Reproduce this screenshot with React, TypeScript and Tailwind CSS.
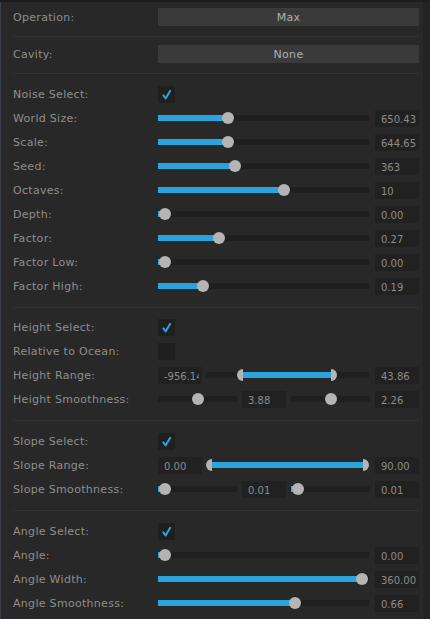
import type { ReactNode } from 'react';

// position along a track, leaving room for the thumb at both ends
const at = (f: number, pad: number) => `calc(${pad}px + ${f} * (100% - ${pad * 2}px))`;

function Row({ label, children }: { label: string; children?: ReactNode }) {
  return (
    <div className="flex h-[24px] items-center">
      <div className="mt-[2px] w-[145px] shrink-0 whitespace-nowrap tracking-[0.3px] text-[#8e8e8e]">{label}</div>
      <div className="flex flex-1 items-center gap-[6px]">{children}</div>
    </div>
  );
}

function Value({ v }: { v: string }) {
  return (
    <div className="h-[17px] w-[44px] shrink-0 bg-[#212121] pl-[6px] pr-[3px] pt-[1px] text-[10px] leading-[17px] text-[#8c8c8c]">
      <div className="overflow-hidden whitespace-nowrap">{v}</div>
    </div>
  );
}

function Slider({ f, fill = true }: { f: number; fill?: boolean }) {
  return (
    <div className="relative h-[6px] flex-1 bg-[#1f1f1f]">
      {fill && <div className="h-full bg-[#2ba3dc]" style={{ width: at(f, 7) }} />}
      <div
        className="absolute top-1/2 h-[12px] w-[12px] -translate-x-1/2 -translate-y-1/2 rounded-full bg-[#b4b4b4]"
        style={{ left: at(f, 7) }}
      />
    </div>
  );
}

function Range({ lo, hi }: { lo: number; hi: number }) {
  return (
    <div className="relative h-[6px] flex-1 bg-[#1f1f1f]">
      <div
        className="absolute top-0 h-full bg-[#2ba3dc]"
        style={{ left: at(lo, 6), right: `calc(100% - ${at(hi, 6)})` }}
      />
      <div
        className="absolute top-1/2 h-[12px] w-[6px] -translate-x-full -translate-y-1/2 rounded-l-full bg-[#b4b4b4]"
        style={{ left: at(lo, 6) }}
      />
      <div
        className="absolute top-1/2 h-[12px] w-[6px] -translate-y-1/2 rounded-r-full bg-[#b4b4b4]"
        style={{ left: at(hi, 6) }}
      />
    </div>
  );
}

function Check({ on }: { on: boolean }) {
  return (
    <div className="flex h-[17px] w-[17px] items-center justify-center bg-[#1f1f1f]">
      {on && (
        <svg width="11" height="11" viewBox="0 0 11 11">
          <path d="M2.4 6.4 L4.6 9.4 L9.2 1.8" fill="none" stroke="#2ba3dc" strokeWidth="2" strokeLinecap="round" strokeLinejoin="round" />
        </svg>
      )}
    </div>
  );
}

function Button({ text }: { text: string }) {
  return (
    <div className="flex h-[18px] flex-1 items-center justify-center bg-[#3a3a3a] pt-[2px] tracking-[0.3px] text-[#b0b0b0]">
      {text}
    </div>
  );
}

const Sep = ({ className }: { className: string }) => <div className={`h-px bg-[#333333] ${className}`} />;

export default function App() {
  return (
    <div className="flex h-[619px] w-[430px] flex-col overflow-hidden bg-[#232323] font-['DejaVu_Sans',sans-serif] text-[11px]">
      <div className="h-[2px] bg-[#1d1d1d]" />
      <div className="flex flex-1">
        <div className="w-[423px] border-l border-[#3b4048] bg-[#282828] pl-[12px] pr-[4px] pt-[3px]">
          <Row label="Operation:">
            <Button text="Max" />
          </Row>
          <Sep className="mt-[7px]" />
          <div className="mt-[5px]">
            <Row label="Cavity:">
              <Button text="None" />
            </Row>
          </div>
          <Sep className="mt-[7px]" />

          {/* noise */}
          <div className="pt-[8px]">
            <Row label="Noise Select:">
              <Check on />
            </Row>
            <Row label="World Size:">
              <Slider f={0.32} />
              <Value v="650.43" />
            </Row>
            <Row label="Scale:">
              <Slider f={0.318} />
              <Value v="644.65" />
            </Row>
            <Row label="Seed:">
              <Slider f={0.355} />
              <Value v="363" />
            </Row>
            <Row label="Octaves:">
              <Slider f={0.604} />
              <Value v="10" />
            </Row>
            <Row label="Depth:">
              <Slider f={0} />
              <Value v="0.00" />
            </Row>
            <Row label="Factor:">
              <Slider f={0.274} />
              <Value v="0.27" />
            </Row>
            <Row label="Factor Low:">
              <Slider f={0} />
              <Value v="0.00" />
            </Row>
            <Row label="Factor High:">
              <Slider f={0.193} />
              <Value v="0.19" />
            </Row>
          </div>
          <Sep className="mt-[9px]" />

          {/* height */}
          <div className="pt-[7px]">
            <Row label="Height Select:">
              <Check on />
            </Row>
            <Row label="Relative to Ocean:">
              <Check on={false} />
            </Row>
            <Row label="Height Range:">
              <div className="flex flex-1 items-center">
                <Value v="-956.14" />
                <div className="ml-[4px] mr-[6px] flex flex-1">
                  <Range lo={0.205} hi={0.788} />
                </div>
                <Value v="43.86" />
              </div>
            </Row>
            <Row label="Height Smoothness:">
              <div className="flex flex-1 items-center gap-[5px]">
                <Slider f={0.508} fill={false} />
                <Value v="3.88" />
                <Slider f={0.508} fill={false} />
                <Value v="2.26" />
              </div>
            </Row>
          </div>
          <Sep className="mt-[9px]" />

          {/* slope */}
          <div className="pt-[8px]">
            <Row label="Slope Select:">
              <Check on />
            </Row>
            <Row label="Slope Range:">
              <div className="flex flex-1 items-center">
                <Value v="0.00" />
                <div className="ml-[4px] mr-[6px] flex flex-1">
                  <Range lo={0} hi={1} />
                </div>
                <Value v="90.00" />
              </div>
            </Row>
            <Row label="Slope Smoothness:">
              <div className="flex flex-1 items-center gap-[5px]">
                <Slider f={0} />
                <Value v="0.01" />
                <Slider f={0} />
                <Value v="0.01" />
              </div>
            </Row>
          </div>
          <Sep className="mt-[9px]" />

          {/* angle */}
          <div className="pt-[8px]">
            <Row label="Angle Select:">
              <Check on />
            </Row>
            <Row label="Angle:">
              <Slider f={0} />
              <Value v="0.00" />
            </Row>
            <Row label="Angle Width:">
              <Slider f={1} />
              <Value v="360.00" />
            </Row>
            <Row label="Angle Smoothness:">
              <Slider f={0.66} />
              <Value v="0.66" />
            </Row>
          </div>
        </div>
        <div className="flex-1" />
      </div>
    </div>
  );
}
